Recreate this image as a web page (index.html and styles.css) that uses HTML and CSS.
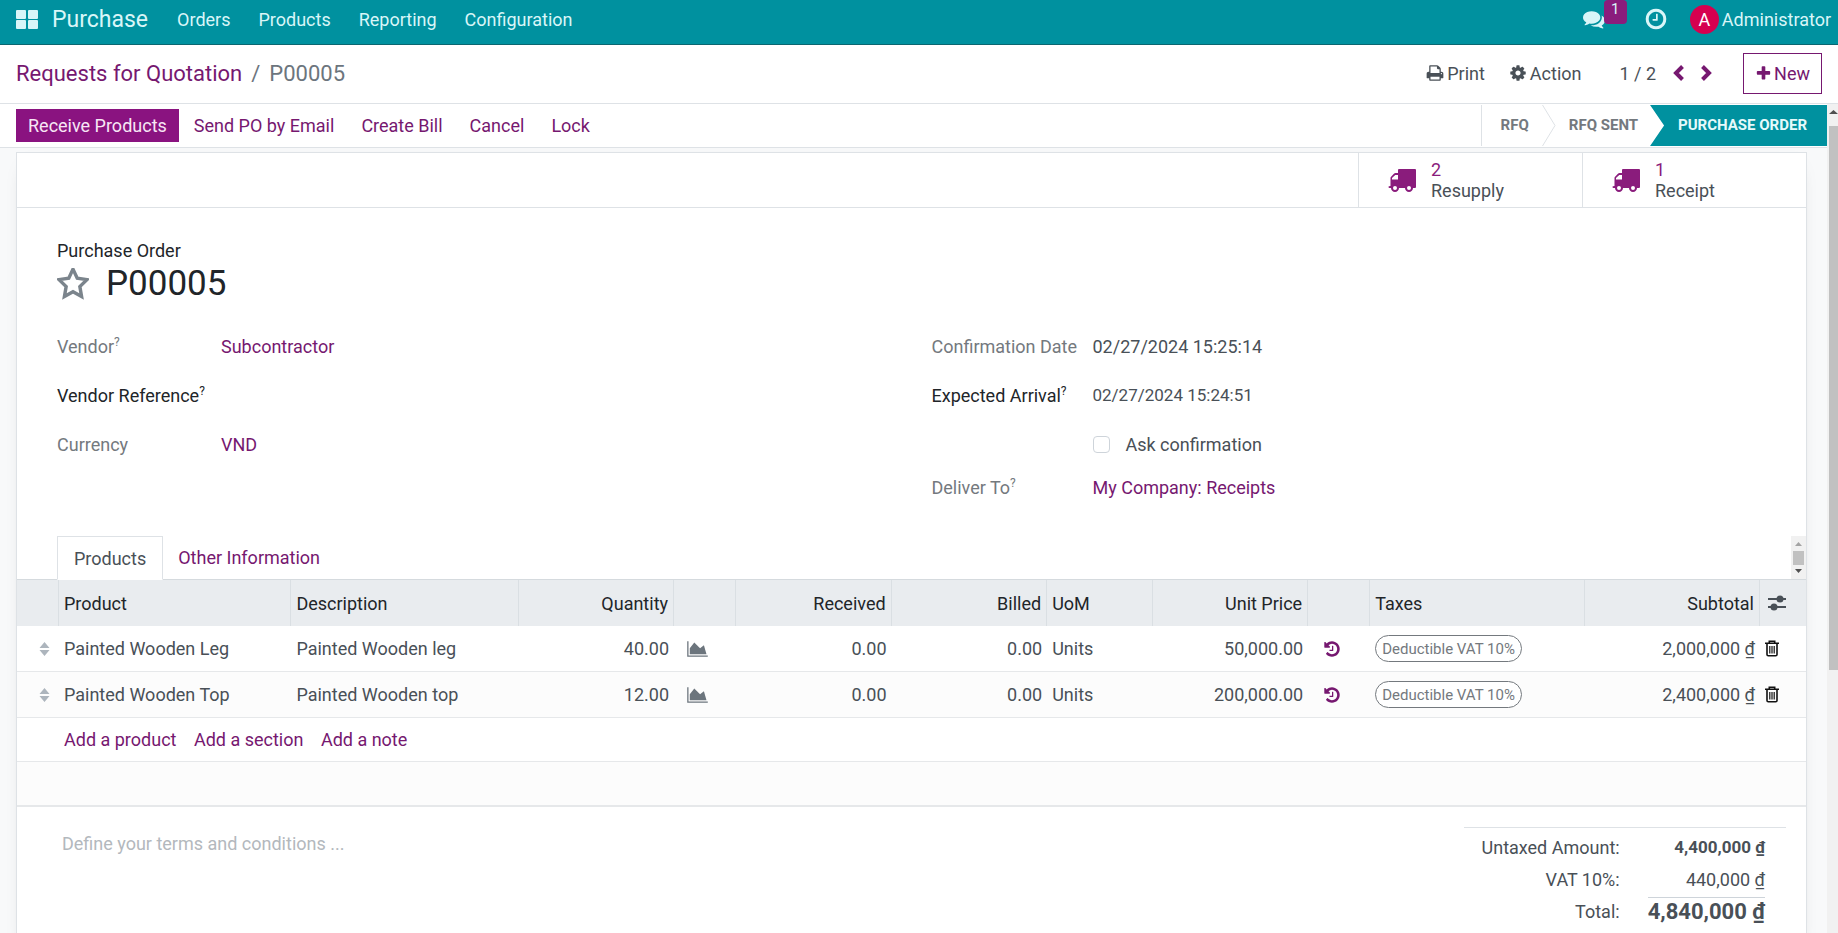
FILE: index.html
```
<!DOCTYPE html>
<html lang="en">
<head>
    <meta charset="utf-8"/>
    <title>P00005 - Purchase</title>
    <link rel="stylesheet" href="styles.css">
</head>
<body>
    <svg class="sprite" aria-hidden="true">
        <symbol id="i-truck" viewBox="0 128 1792 1536"><path fill-rule="evenodd" d="M704 192q-64 0-64 64v192h-160q-50 0-86 36l-198 198q-36 36-36 86v512q-64 0-96 19t-32 45q0 64 64 64h96q0 106 75 181t181 75 181-75 75-181h384q0 106 75 181t181 75 181-75 75-181h128q64 0 64-64v-1088q0-64-64-64zM256 864v-96l208-192h176v288zM448 1280a128 128 0 1 1 0 256a128 128 0 1 1 0-256zM1344 1280a128 128 0 1 1 0 256a128 128 0 1 1 0-256z"/></symbol>
        <symbol id="i-chart" viewBox="0 0 2048 1792"><path d="M2048 1536v128h-2048v-1536h128v1408h1920zm-384-1024l256 896h-1664v-576l448-576 576 576z"/></symbol>
        <symbol id="i-history" viewBox="0 0 1792 1792"><path d="M1664 896q0 156-61 298t-164 245-245 164-298 61q-172 0-327-72.5t-264-204.5q-7-10-6.500-22.500t8.500-20.500l137-138q10-9 25-9 16 2 23 12 73 95 179 147t225 52q104 0 198.500-40.5t163.500-109.500 109.500-163.500 40.5-198.500-40.5-198.500-109.500-163.500-163.500-109.500-198.500-40.500q-98 0-188 35.5t-160 101.500l137 138q31 30 14 69-17 40-59 40h-448q-26 0-45-19t-19-45v-448q0-42 40-59 39-17 69 14l130 129q107-101 244.500-156.500t284.500-55.500q156 0 298 61t245 164 164 245 61 298zm-640-288v448q0 14-9 23t-23 9h-320q-14 0-23-9t-9-23v-64q0-14 9-23t23-9h224v-352q0-14 9-23t23-9h64q14 0 23 9t9 23z"/></symbol>
        <symbol id="i-trash" viewBox="0 0 14 17"><path fill="none" stroke="currentColor" stroke-width="1.6" d="M0 3.300h14M4.300 3V1.200h5.400V3M2 3.500v11q0 1.300 1.300 1.300h7.400q1.300 0 1.300-1.300v-11"/><path fill="none" stroke="currentColor" stroke-width="1.200" d="M4.800 6v7.500M7 6v7.500M9.200 6v7.500"/></symbol>
        <symbol id="i-sort" viewBox="0 0 10 14"><path d="M0 6L5 0l5 6zM0 8h10l-5 6z"/></symbol>
    </svg>

    <div class="app">
        <header class="navbar">
            <button class="apps" aria-label="Home Menu">
                <svg width="22" height="19" viewBox="0 0 22 19"><rect width="10" height="9" rx="1"/><rect x="12" width="10" height="9" rx="1"/><rect y="10" width="10" height="9" rx="1"/><rect x="12" y="10" width="10" height="9" rx="1"/></svg>
            </button>
            <a class="brand" href="#">Purchase</a>
            <nav class="menu">
                <a href="#">Orders</a>
                <a href="#">Products</a>
                <a href="#">Reporting</a>
                <a href="#">Configuration</a>
            </nav>
            <div class="systray">
                <button class="chat" aria-label="Messages">
                    <svg width="22" height="22" viewBox="0 0 1792 1792"><path d="M1408 768q0 139-94 257t-256.500 186.500-353.500 68.500q-86 0-176-16-124 88-278 128-36 9-86 16h-3q-11 0-20.500-8t-11.500-21q-1-3-1-6.500t.5-6.500 2-6l2.500-5 3.500-5.500 4-5 4.500-5 4-4.500q5-6 23-25t26-29.500 22.500-29 25-38.500 20.500-44q-124-72-195-177t-71-224q0-139 94-257t256.500-186.500 353.500-68.500 353.500 68.500 256.500 186.500 94 257zm384 256q0 120-71 224.500t-195 176.500q10 24 20.500 44t25 38.500 22.500 29 26 29.500 23 25q1 1 4 4.500t4.500 5 4 5 3.500 5.500l2.500 5 2 6 .5 6.500-1 6.500q-3 14-13 22t-22 7q-50-7-86-16-154-40-278-128-90 16-176 16-271 0-472-132 58 4 88 4 161 0 309-45t264-129q125-92 192-212t67-254q0-77-23-152 129 71 204 178t75 230z"/></svg>
                    <span class="badge">1</span>
                </button>
                <button class="clock" aria-label="Activities">
                    <svg width="24" height="24" viewBox="0 0 1792 1792"><path d="M1024 544v448q0 14-9 23t-23 9h-320q-14 0-23-9t-9-23v-64q0-14 9-23t23-9h224v-352q0-14 9-23t23-9h64q14 0 23 9t9 23zm416 352q0-148-73-273t-198-198-273-73-273 73-198 198-73 273 73 273 198 198 273 73 273-73 198-198 73-273zm224 0q0 209-103 385.5t-279.5 279.500-385.5 103-385.5-103-279.500-279.500-103-385.500 103-385.500 279.500-279.500 385.500-103 385.500 103 279.500 279.500 103 385.500z"/></svg>
                </button>
                <button class="user"><span class="avatar">A</span>Administrator</button>
            </div>
        </header>

        <div class="control-panel">
            <div class="breadcrumb">
                <a href="#">Requests for Quotation</a>
                <span>/</span>
                <span>P00005</span>
            </div>
            <div class="cp-right">
                <button class="cp-btn">
                    <svg width="18" height="18" viewBox="0 0 1792 1792"><path d="M448 1536h896v-256h-896v256zm0-640h896v-384h-160q-40 0-68-28t-28-68v-160h-640v640zm1152 64q0-26-19-45t-45-19-45 19-19 45 19 45 45 19 45-19 19-45zm128 0v416q0 13-9.500 22.500t-22.500 9.500h-224v160q0 40-28 68t-68 28h-960q-40 0-68-28t-28-68v-160h-224q-13 0-22.500-9.500t-9.500-22.500v-416q0-79 56.500-135.500t135.500-56.500h64v-544q0-40 28-68t68-28h672q40 0 88 20t76 48l152 152q28 28 48 76t20 88v256h64q79 0 135.500 56.500t56.500 135.500z"/></svg>
                    Print
                </button>
                <button class="cp-btn">
                    <svg width="18" height="18" viewBox="0 0 1792 1792"><path d="M1152 896q0-106-75-181t-181-75-181 75-75 181 75 181 181 75 181-75 75-181zm512-109v222q0 12-8 23t-20 13l-185 28q-19 54-39 91 35 50 107 138 10 12 10 25t-9 23q-27 37-99 108t-94 71q-12 0-26-9l-138-108q-44 23-91 38-16 136-29 186-7 28-36 28h-222q-14 0-24.500-8.500t-11.500-21.500l-28-184q-49-16-90-37l-141 107q-10 9-25 9-14 0-25-11-126-114-165-168-7-10-7-23 0-12 8-23 15-21 51-66.500t54-70.500q-27-50-41-99l-183-27q-13-2-21-12.500t-8-23.500v-222q0-12 8-23t19-13l186-28q14-46 39-92-40-57-107-138-10-12-10-24 0-10 9-23 26-36 98.500-107.500t94.500-71.500q13 0 26 10l138 107q44-23 91-38 16-136 29-186 7-28 36-28h222q14 0 24.500 8.500t11.500 21.500l28 184q49 16 90 37l142-107q9-9 24-9 13 0 25 10 129 119 165 170 7 8 7 22 0 12-8 23-15 21-51 66.500t-54 70.500q26 50 41 98l183 28q13 2 21 12.500t8 23.500z"/></svg>
                    Action
                </button>
                <div class="pager">
                    <span>1 / 2</span>
                    <button aria-label="Previous"><svg width="11" height="16" viewBox="0 0 11 16"><path d="M9.500 1.500L3 8l6.500 6.500"/></svg></button>
                    <button aria-label="Next"><svg width="11" height="16" viewBox="0 0 11 16"><path d="M1.500 1.500L8 8l-6.500 6.500"/></svg></button>
                </div>
                <button class="btn-new">
                    <svg width="17" height="17" viewBox="0 0 1792 1792"><path d="M1600 736v192q0 40-28 68t-68 28h-416v416q0 40-28 68t-68 28h-192q-40 0-68-28t-28-68v-416h-416q-40 0-68-28t-28-68v-192q0-40 28-68t68-28h416v-416q0-40 28-68t68-28h192q40 0 68 28t28 68v416h416q40 0 68 28t28 68z"/></svg>
                    New
                </button>
            </div>
        </div>

        <div class="view">
            <main class="form-view">
                <div class="statusbar">
                    <div class="actions">
                        <button class="primary">Receive Products</button>
                        <button>Send PO by Email</button>
                        <button>Create Bill</button>
                        <button>Cancel</button>
                        <button>Lock</button>
                    </div>
                    <div class="stages">
                        <button>RFQ</button>
                        <svg class="chevron" width="14" height="41" viewBox="0 0 14 41"><path d="M0.500 0L13 20.500L0.500 41"/></svg>
                        <button>RFQ SENT</button>
                        <button class="current">PURCHASE ORDER</button>
                    </div>
                </div>

                <div class="sheet">
                    <div class="button-box">
                        <button>
                            <svg width="28" height="24"><use href="#i-truck"/></svg>
                            <span><b>2</b>Resupply</span>
                        </button>
                        <button>
                            <svg width="28" height="24"><use href="#i-truck"/></svg>
                            <span><b>1</b>Receipt</span>
                        </button>
                    </div>

                    <div class="title">
                        <span>Purchase Order</span>
                        <h1>
                            <button class="star" aria-label="Priority"><svg width="32" height="32" viewBox="2 4 28 28"><path d="M16 5l3.700 8 8.500 1.200-6.200 6 1.500 8.700-7.500-4.200-7.500 4.200 1.500-8.700-6.200-6 8.500-1.200z"/></svg></button>
                            P00005
                        </h1>
                    </div>

                    <div class="groups">
                        <div class="group">
                            <div class="field">
                                <span class="label">Vendor<sup>?</sup></span>
                                <a href="#">Subcontractor</a>
                            </div>
                            <div class="field">
                                <label class="label editable" for="vendor_ref">Vendor Reference<sup>?</sup></label>
                                <input type="text" id="vendor_ref"/>
                            </div>
                            <div class="field">
                                <span class="label">Currency</span>
                                <a href="#">VND</a>
                            </div>
                        </div>
                        <div class="group">
                            <div class="field">
                                <span class="label">Confirmation Date</span>
                                <span>02/27/2024 15:25:14</span>
                            </div>
                            <div class="field">
                                <label class="label editable" for="date_planned">Expected Arrival<sup>?</sup></label>
                                <input type="text" id="date_planned" value="02/27/2024 15:24:51"/>
                            </div>
                            <div class="field check">
                                <input type="checkbox" id="ask"/>
                                <label for="ask">Ask confirmation</label>
                            </div>
                            <div class="field last">
                                <span class="label">Deliver To<sup>?</sup></span>
                                <a href="#">My Company: Receipts</a>
                            </div>
                        </div>
                    </div>

                    <div class="tabs">
                        <button class="active">Products</button>
                        <button>Other Information</button>
                        <div class="tab-scroll">
                            <svg width="7" height="4" viewBox="0 0 7 4"><path fill="#a3a3a3" d="M0 4L3.500 0L7 4z"/></svg>
                            <div></div>
                            <svg width="7" height="4" viewBox="0 0 7 4"><path fill="#505050" d="M0 0h7L3.500 4z"/></svg>
                        </div>
                    </div>

                    <table class="lines">
                        <colgroup>
                            <col class="c-handle"><col class="c-product"><col class="c-desc"><col class="c-num"><col class="c-icon"><col class="c-num"><col class="c-num"><col class="c-uom"><col class="c-num"><col class="c-icon"><col class="c-tax"><col class="c-sub"><col class="c-opt">
                        </colgroup>
                        <thead>
                            <tr>
                                <th></th>
                                <th>Product</th>
                                <th>Description</th>
                                <th class="num">Quantity</th>
                                <th></th>
                                <th class="num">Received</th>
                                <th class="num">Billed</th>
                                <th>UoM</th>
                                <th class="num">Unit Price</th>
                                <th></th>
                                <th>Taxes</th>
                                <th class="num">Subtotal</th>
                                <th class="opt"><button aria-label="Optional columns"><svg width="18" height="16" viewBox="0 0 18 16"><path stroke="#495057" stroke-width="2" d="M0 4h18M0 12h18"/><circle cx="12" cy="4" r="3.500"/><circle cx="6" cy="12" r="3.500"/></svg></button></th>
                            </tr>
                        </thead>
                        <tbody>
                            <tr>
                                <td class="handle"><svg width="11" height="14"><use href="#i-sort"/></svg></td>
                                <td>Painted Wooden Leg</td>
                                <td>Painted Wooden leg</td>
                                <td class="num">40.00</td>
                                <td class="chart"><button aria-label="Forecast"><svg width="21" height="18"><use href="#i-chart"/></svg></button></td>
                                <td class="num">0.00</td>
                                <td class="num">0.00</td>
                                <td>Units</td>
                                <td class="num">50,000.00</td>
                                <td class="history"><button aria-label="Price history"><svg width="18" height="18"><use href="#i-history"/></svg></button></td>
                                <td><span class="tag">Deductible VAT 10%</span></td>
                                <td class="num">2,000,000 ₫</td>
                                <td class="trash"><button aria-label="Delete"><svg width="14" height="17"><use href="#i-trash"/></svg></button></td>
                            </tr>
                            <tr>
                                <td class="handle"><svg width="11" height="14"><use href="#i-sort"/></svg></td>
                                <td>Painted Wooden Top</td>
                                <td>Painted Wooden top</td>
                                <td class="num">12.00</td>
                                <td class="chart"><button aria-label="Forecast"><svg width="21" height="18"><use href="#i-chart"/></svg></button></td>
                                <td class="num">0.00</td>
                                <td class="num">0.00</td>
                                <td>Units</td>
                                <td class="num">200,000.00</td>
                                <td class="history"><button aria-label="Price history"><svg width="18" height="18"><use href="#i-history"/></svg></button></td>
                                <td><span class="tag">Deductible VAT 10%</span></td>
                                <td class="num">2,400,000 ₫</td>
                                <td class="trash"><button aria-label="Delete"><svg width="14" height="17"><use href="#i-trash"/></svg></button></td>
                            </tr>
                            <tr class="short">
                                <td></td>
                                <td class="add" colspan="12">
                                    <a href="#">Add a product</a>
                                    <a href="#">Add a section</a>
                                    <a href="#">Add a note</a>
                                </td>
                            </tr>
                            <tr class="short"><td colspan="13"></td></tr>
                        </tbody>
                    </table>

                    <div class="bottom">
                        <textarea aria-label="Terms and conditions" placeholder="Define your terms and conditions ..."></textarea>
                        <table class="totals">
                            <tr><th>Untaxed Amount:</th><td><strong>4,400,000 ₫</strong></td></tr>
                            <tr><th>VAT 10%:</th><td>440,000 ₫</td></tr>
                            <tr><th>Total:</th><td class="grand"><strong>4,840,000 ₫</strong></td></tr>
                        </table>
                    </div>
                </div>
            </main>
            <div class="scrollbar">
                <svg width="9" height="4" viewBox="0 0 9 4"><path fill="#505050" d="M0 4L4.500 0L9 4z"/></svg>
                <div class="thumb"></div>
            </div>
        </div>
    </div>
</body>
</html>
```
FILE: styles.css
```
* {
    box-sizing: border-box;
}
body {
    margin: 0;
    font-family: Roboto, "Liberation Sans", sans-serif;
    font-size: 18px;
    line-height: 21px;
    color: #495057;
    background: #fff;
}
a {
    color: #761870;
    text-decoration: none;
}
button {
    padding: 0;
    border: none;
    background: none;
    font: inherit;
    color: inherit;
    cursor: pointer;
}
svg {
    display: block;
    flex: none;
    fill: currentColor;
}
.sprite {
    position: absolute;
    width: 0;
    height: 0;
}
.app {
    display: flex;
    flex-direction: column;
    height: 100vh;
    overflow: hidden;
}

/* top bar */
.navbar {
    display: flex;
    align-items: center;
    flex: none;
    height: 45px;
    padding: 0 7px 6px 16px;
    background: #00919f;
    border-bottom: 1px solid #0b6670;
    color: #d9f6f8;
}
.navbar a {
    color: #d9f6f8;
}
.brand {
    margin: 0 15px 0 14px;
    font-size: 23px;
}
.menu {
    display: flex;
}
.menu a {
    padding: 0 14px;
}
.systray {
    display: flex;
    align-items: center;
    margin-left: auto;
}
.systray button {
    display: flex;
    align-items: center;
}
.chat {
    position: relative;
    margin-right: 39px;
}
.badge {
    position: absolute;
    left: 21px;
    top: -8px;
    width: 23px;
    height: 24px;
    border-radius: 4px;
    background: #8a1c7c;
    font-size: 15px;
    line-height: 18px;
}
.clock {
    margin-right: 22px;
}
.avatar {
    width: 29px;
    height: 29px;
    margin-right: 3px;
    border-radius: 50%;
    background: #d6004f;
    color: #fff;
    line-height: 29px;
    text-align: center;
}

/* control panel */
.control-panel {
    display: flex;
    align-items: center;
    justify-content: space-between;
    flex: none;
    height: 59px;
    padding: 0 16px 2px;
    border-bottom: 1px solid #dee2e6;
}
.breadcrumb {
    display: flex;
    gap: 9px;
    font-size: 22px;
    color: #6c757d;
}
.cp-right {
    display: flex;
    align-items: center;
}
.cp-btn {
    display: flex;
    align-items: center;
    gap: 3px;
    margin-right: 24px;
}
.pager {
    display: flex;
    align-items: center;
    margin: 0 31px 0 14px;
}
.pager button {
    margin-left: 17px;
}
.pager path {
    fill: none;
    stroke: #761870;
    stroke-width: 4;
}
.btn-new {
    display: flex;
    align-items: center;
    gap: 2px;
    height: 41px;
    padding: 0 11px;
    border: 1px solid #761870;
    color: #761870;
}

/* form */
.view {
    display: flex;
    flex: 1;
    min-height: 0;
}
.form-view {
    flex: 1;
    min-width: 0;
    overflow: hidden;
    background: #f8f9fa;
}
.statusbar {
    display: flex;
    justify-content: space-between;
    height: 44px;
    padding-left: 16px;
    border-bottom: 1px solid #dee2e6;
    background: #fff;
}
.actions {
    display: flex;
    align-items: center;
    gap: 3px;
}
.actions button {
    height: 33px;
    padding: 0 12px;
    color: #761870;
}
.actions .primary {
    background: #8a1380;
    color: #f7e6f5;
}
.stages {
    display: flex;
    align-items: center;
    height: 41px;
    margin-top: 1px;
    border-left: 1px solid #dee2e6;
    font-size: 15px;
    font-weight: 700;
}
.stages button {
    height: 41px;
    padding: 0 13px 0 19px;
    color: #74797e;
}
.chevron {
    fill: none;
    stroke: #dee2e6;
}
.chevron + button {
    padding: 0 12px 0 13px;
}
.stages .current {
    padding: 0 20px 0 28px;
    background: #00919f;
    color: #e6fafb;
    clip-path: polygon(0 0, 100% 0, 100% 100%, 0 100%, 14px 50%);
}
.sheet {
    min-height: 800px;
    margin: 4px 20px 0 16px;
    border: 1px solid #dee2e6;
    background: #fff;
    box-shadow: 0 5px 20px -15px rgba(0, 0, 0, 0.4);
}
.button-box {
    display: flex;
    justify-content: flex-end;
    height: 55px;
    border-bottom: 1px solid #dee2e6;
}
.button-box button {
    display: flex;
    align-items: center;
    gap: 15px;
    width: 224px;
    padding-left: 29px;
    border-left: 1px solid #dee2e6;
    text-align: left;
}
.button-box svg,
.button-box b {
    color: #8a1c7c;
}
.button-box b {
    display: block;
    font-weight: 400;
}
.title {
    padding: 32px 40px 0;
    color: #212529;
}
.title h1 {
    display: flex;
    align-items: center;
    gap: 17px;
    margin: 0;
    font-size: 35px;
    line-height: 45px;
    font-weight: 400;
}
.star path {
    fill: none;
    stroke: #7b848c;
    stroke-width: 3;
}
.groups {
    display: grid;
    grid-template-columns: 1fr 1fr;
    gap: 40px;
    padding: 16px 40px 0;
}
.field {
    display: flex;
    align-items: center;
    height: 49px;
}
.label {
    flex: none;
    width: 164px;
    color: #74797e;
}
.group + .group .label {
    width: 161px;
}
.label.editable {
    color: #212529;
}
.label sup {
    font-size: 12px;
    line-height: 0;
}
.field input[type=text] {
    flex: 1;
    min-width: 0;
    padding: 0;
    border: none;
    background: none;
    font: inherit;
    font-size: 17px;
    color: inherit;
}
.field.check {
    gap: 16px;
    padding-left: 161px;
}
.check input {
    appearance: none;
    width: 17px;
    height: 17px;
    margin: 0;
    border: 1px solid #ced4da;
    border-radius: 4px;
}
.field.last {
    height: 36px;
}

/* notebook */
.tabs {
    display: flex;
    height: 44px;
    margin-top: 31px;
    padding-left: 40px;
    border-bottom: 1px solid #d5dade;
}
.tabs button {
    padding: 0 15px;
    color: #761870;
}
.tabs .active {
    height: 44px;
    padding: 0 16px;
    border: 1px solid #dee2e6;
    border-bottom-color: #fff;
    background: #fff;
    color: #495057;
}
.tab-scroll {
    display: flex;
    flex-direction: column;
    align-items: center;
    justify-content: space-between;
    width: 15px;
    margin-left: auto;
    padding: 6px 0;
    background: #f1f1f1;
}
.tab-scroll div {
    width: 11px;
    height: 14px;
    background: #c1c1c1;
}
.lines {
    width: 100%;
    table-layout: fixed;
    border-spacing: 0;
    border-bottom: 1px solid #e6e8ea;
}
.c-handle { width: 42px; }
.c-product { width: 13%; }
.c-desc { width: 12.7%; }
.c-num { width: 8.7%; }
.c-icon { width: 62px; }
.c-uom { width: 5.9%; }
.c-tax { width: 12%; }
.c-sub { width: 9.8%; }
.c-opt { width: 46px; }
.lines th {
    height: 46px;
    padding: 0 5px;
    border-right: 1px solid #dadfe3;
    background: #e9ecef;
    color: #212529;
    font-weight: 400;
    text-align: left;
}
.lines th:last-child {
    border-right: none;
}
.lines td {
    height: 46px;
    padding: 0 5px;
    border-bottom: 1px solid #e6e8ea;
}
.lines .short td {
    height: 44px;
}
.lines tbody tr:nth-child(even) {
    background: #fcfcfc;
}
.lines .num {
    text-align: right;
    white-space: nowrap;
}
.lines td.handle {
    padding-left: 22px;
    color: #adb5bd;
}
.lines .opt {
    padding-left: 8px;
    color: #495057;
}
.lines .chart {
    padding-left: 13px;
    color: #6c757d;
}
.lines .history {
    padding-left: 15px;
    color: #761870;
}
.lines .trash {
    color: #111;
}
.lines button {
    display: block;
}
.tag {
    display: inline-block;
    height: 27px;
    padding: 0 6px;
    border: 1px solid #74797e;
    border-radius: 14px;
    background: #fff;
    color: #74797e;
    font-size: 15px;
    line-height: 26px;
    white-space: nowrap;
}
.add a {
    margin-right: 13px;
}

/* footer */
.bottom {
    display: flex;
    justify-content: space-between;
    align-items: flex-start;
    padding: 20px 20px 0 45px;
}
.bottom textarea {
    width: 40%;
    height: 60px;
    padding: 6px 0;
    border: none;
    resize: none;
    font: inherit;
}
.bottom textarea::placeholder {
    color: #b3b8bd;
}
.totals {
    width: 322px;
    padding-top: 3px;
    border-spacing: 0;
    border-top: 1px solid #dee2e6;
}
.totals th {
    width: 100%;
    padding: 0;
    font-weight: 400;
    text-align: right;
}
.totals td {
    height: 32px;
    padding: 0 21px 0 28px;
    text-align: right;
    white-space: nowrap;
}
.totals strong {
    display: inline-block;
    font-size: 17px;
    font-weight: 700;
}
.totals .grand strong {
    border-top: 1px solid #ced4da;
    font-size: 22px;
    line-height: 27px;
}

.scrollbar {
    flex: none;
    width: 11px;
    padding: 6px 0 0 2px;
    background: #f1f1f1;
}
.thumb {
    height: 544px;
    margin-top: 12px;
    background: #c1c1c1;
}
```
